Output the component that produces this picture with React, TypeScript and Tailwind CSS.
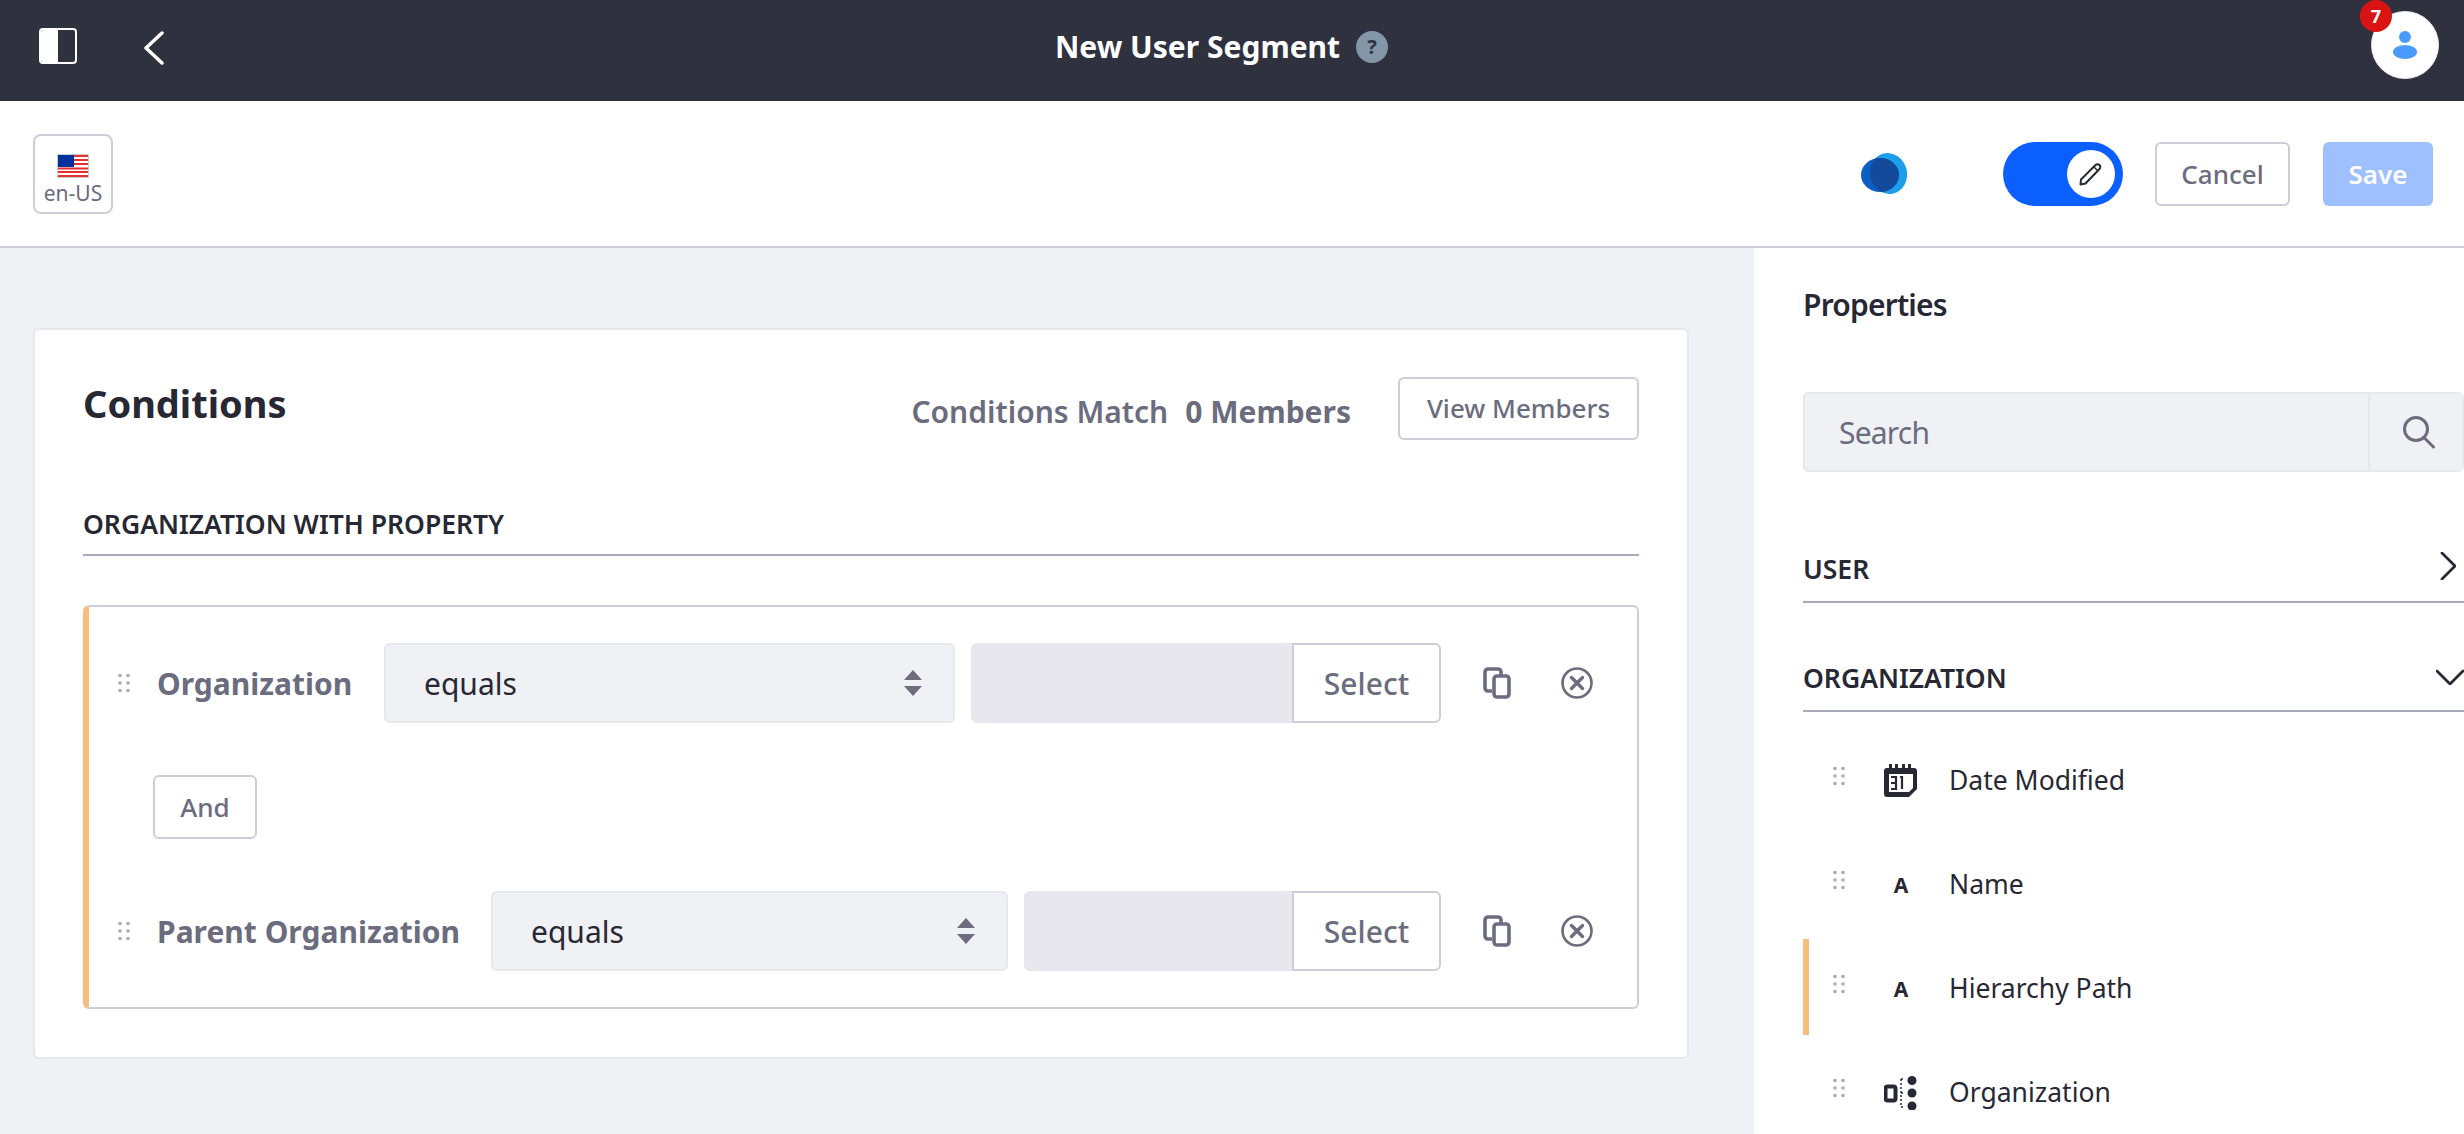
const Grip = () => (
  <svg width="12" height="20" viewBox="0 0 12 20" className="shrink-0 fill-[#a7a9bc]">
    <circle cx="2" cy="2.5" r="1.8" />
    <circle cx="10" cy="2.5" r="1.8" />
    <circle cx="2" cy="10" r="1.8" />
    <circle cx="10" cy="10" r="1.8" />
    <circle cx="2" cy="17.5" r="1.8" />
    <circle cx="10" cy="17.5" r="1.8" />
  </svg>
);

const CopyIcon = () => (
  <svg width="28" height="32" viewBox="0 0 28 32" fill="none" className="stroke-[#6b6c7e] stroke-[3.6]">
    <path d="M9 24H5a3 3 0 0 1-3-3V5a3 3 0 0 1 3-3h10a3 3 0 0 1 3 3v4" />
    <rect x="11" y="9" width="15" height="21" rx="3" />
  </svg>
);

const RemoveIcon = () => (
  <svg width="32" height="32" viewBox="0 0 32 32" fill="none" className="stroke-[#6b6c7e]">
    <circle cx="16" cy="16" r="14.5" strokeWidth="2.6" />
    <path d="M10.5 10.5l11 11M21.5 10.5l-11 11" strokeWidth="3.4" strokeLinecap="round" />
  </svg>
);

const Flag = () => (
  <svg width="32" height="24" viewBox="0 0 32 24" className="block">
    <rect width="32" height="24" fill="#c9cbd6" />
    <rect x="1" y="1" width="30" height="22" fill="#fff" />
    <path d="M1 2h30M1 6h30M1 10h30M1 14.500h30M1 18h30M1 22h30" stroke="#e8312f" strokeWidth="2" />
    <rect x="1" y="1" width="16" height="12" fill="#00309c" />
  </svg>
);

const ConditionRow = ({ label, labelWidth, selectWidth, inputWidth }: { label: string; labelWidth: string; selectWidth: string; inputWidth: string }) => (
  <div className="flex h-[80px] items-center">
    <div className="ml-[29px]">
      <Grip />
    </div>
    <span className={`ml-[27px] whitespace-nowrap text-[30px] font-bold text-[#6b6c7e] ${labelWidth}`}>{label}</span>
    <div className={`flex h-[80px] items-center justify-between rounded-md border-2 border-[#e7e7ed] bg-[#f0f1f5] pl-[38px] pr-[30px] ${selectWidth}`}>
      <span className="text-[30px] text-[#272833]">equals</span>
      <svg width="20" height="26" viewBox="0 0 20 26" className="fill-[#6b6c7e]">
        <path d="M10 0l9 10H1zM10 26L1 16h18z" />
      </svg>
    </div>
    <div className={`ml-[16px] h-[80px] rounded-l-md bg-[#e7e7ed] ${inputWidth}`} />
    <div className="flex h-[80px] w-[149px] items-center justify-center rounded-r-md border-2 border-[#cdced9] bg-white text-[30px] font-medium text-[#6b6c7e]">
      Select
    </div>
    <div className="ml-[42px]">
      <CopyIcon />
    </div>
    <div className="ml-[50px]">
      <RemoveIcon />
    </div>
  </div>
);

const PropertyItem = ({ label, icon, active }: { label: string; icon: React.ReactNode; active?: boolean }) => (
  <div className="relative flex h-[104px] items-center pl-[30px]">
    {active && <div className="absolute left-0 top-[2px] h-[96px] w-[6px] bg-[#f6bd7c]" />}
    <div className="-mt-[10px]">
      <Grip />
    </div>
    <div className="ml-[39px] flex w-[34px] justify-center">{icon}</div>
    <span className="ml-[31px] text-[26.5px] text-[#272833]">{label}</span>
  </div>
);

const LetterIcon = () => <span className="text-[21px] font-bold leading-none text-[#272833]">A</span>;

const CalendarIcon = () => (
  <svg width="34" height="34" viewBox="0 0 34 34">
    <path d="M5 0h3v4h3V0h3v4h4V0h3v4h3V0h3v4h3a3 3 0 0 1 3 3v18l-8 8H3a3 3 0 0 1-3-3V7a3 3 0 0 1 3-3h2z" fill="#272833" />
    <rect x="5" y="10" width="24" height="18" fill="#fff" />
    <path d="M7 13h5v12H7M7 19h5M16 13h2v12" fill="none" stroke="#272833" strokeWidth="2.200" />
    <path d="M25 28h4v-4z" fill="#272833" />
  </svg>
);

const OrgIcon = () => (
  <svg width="34" height="34" viewBox="0 0 34 34">
    <rect x="1.500" y="10.500" width="10" height="14" rx="2" fill="none" stroke="#272833" strokeWidth="4" />
    <path d="M17 3v28M17 3h4M17 17h4M17 31h4" stroke="#272833" strokeWidth="1.500" strokeDasharray="2 2" fill="none" />
    <circle cx="28" cy="4.500" r="4.500" fill="#272833" />
    <circle cx="28" cy="17" r="4.500" fill="#272833" />
    <circle cx="28" cy="30" r="4.500" fill="#272833" />
  </svg>
);

export default function App() {
  return (
    <div className="flex h-[1134px] w-[2464px] flex-col overflow-hidden bg-white font-['Noto_Sans',sans-serif]">
      {/* top bar */}
      <header className="relative flex h-[101px] shrink-0 items-center justify-center bg-[#30313f]">
        <div className="absolute left-[39px] top-[28px] flex h-[36px] w-[38px] overflow-hidden rounded-sm border-2 border-white">
          <div className="w-[17px] bg-white" />
        </div>
        <svg width="22" height="34" viewBox="0 0 22 34" fill="none" className="absolute left-[143px] top-[31px] stroke-white">
          <path d="M19 2L3 17l16 15" strokeWidth="3.500" strokeLinecap="round" strokeLinejoin="round" />
        </svg>
        <div className="-mt-[8px] mr-[21px] flex items-center">
          <span className="text-[30px] font-bold text-white">New User Segment</span>
          <span className="ml-[16px] flex h-[32px] w-[32px] items-center justify-center rounded-full bg-[#8296a7] text-[20px] font-bold text-[#30313f]">?</span>
        </div>
        <div className="absolute left-[2371px] top-[11px] flex h-[68px] w-[68px] items-center justify-center rounded-full border border-[#e7e7ed] bg-white">
          <svg width="24" height="28" viewBox="0 0 24 28" className="fill-[#4b9bff]">
            <circle cx="12" cy="6" r="6" />
            <ellipse cx="12" cy="21" rx="12" ry="7" />
          </svg>
        </div>
        <div className="absolute left-[2360px] top-0 flex h-[32px] w-[32px] items-center justify-center rounded-full bg-[#da1414] text-[18px] font-bold text-white">7</div>
      </header>

      {/* toolbar */}
      <div className="flex h-[147px] shrink-0 items-center border-b-2 border-[#cdced9] pl-[33px] pr-[31px]">
        <div className="flex h-[80px] w-[80px] flex-col items-center rounded-lg border-2 border-[#cdced9] pt-[18px]">
          <Flag />
          <span className="mt-[2px] text-[21px] leading-[26px] text-[#6b6c7e]">en-US</span>
        </div>
        <svg width="46" height="41" viewBox="0 0 46 41" className="ml-auto">
          <defs>
            <clipPath id="logo-overlap">
              <ellipse cx="27.500" cy="20.500" rx="18.500" ry="20.500" transform="rotate(-14 27.500 20.500)" />
            </clipPath>
          </defs>
          <ellipse cx="27.500" cy="20.500" rx="18.500" ry="20.500" fill="#1c9fe8" transform="rotate(-14 27.500 20.500)" />
          <ellipse cx="19" cy="22" rx="19" ry="17" fill="#0b5fc4" />
          <ellipse cx="19" cy="22" rx="19" ry="17" fill="#144a9c" clipPath="url(#logo-overlap)" />
        </svg>
        <div className="ml-[96px] flex h-[64px] w-[120px] items-center justify-end rounded-full bg-[#0b5fff] pr-[8px]">
          <div className="flex h-[48px] w-[48px] items-center justify-center rounded-full bg-white">
            <svg width="24" height="24" viewBox="0 0 24 24" fill="none" className="stroke-[#272833]">
              <path d="M2 17.500L16.500 3a2.500 2.500 0 0 1 4 4L6.500 21.500 1.500 22.500z" strokeWidth="2" strokeLinejoin="round" />
              <path d="M15 5l4 4" strokeWidth="1.500" />
            </svg>
          </div>
        </div>
        <button className="ml-[32px] h-[64px] w-[135px] rounded-md border-2 border-[#cdced9] bg-white pt-[2px] text-[26px] font-medium text-[#6b6c7e]">Cancel</button>
        <button className="ml-[33px] h-[64px] w-[110px] rounded-md bg-[#9fc0ff] pt-[2px] text-[26px] font-semibold text-white">Save</button>
      </div>

      <div className="flex min-h-0 flex-1">
        {/* main */}
        <main className="w-[1754px] shrink-0 bg-[#f0f1f5] pl-[33px] pt-[80px]">
          <section className="h-[731px] w-[1656px] rounded-md border-2 border-[#e7e7ed] bg-white pl-[48px] pt-[47px]">
            <div className="flex h-[65px] w-[1556px] items-start">
              <h2 className="mt-[7px] text-[38px] font-bold leading-[38px] text-[#272833]">Conditions</h2>
              <span className="ml-auto mt-[15px] text-[30px] font-semibold leading-[40px] text-[#6b6c7e]">Conditions Match</span>
              <span className="ml-[17px] mt-[15px] text-[30px] font-bold leading-[40px] text-[#6b6c7e]">0 Members</span>
              <button className="ml-[47px] h-[63px] w-[241px] rounded-md border-2 border-[#cdced9] bg-white text-[26px] font-medium text-[#6b6c7e]">View Members</button>
            </div>
            <div className="mt-[65px] w-[1556px] border-b-2 border-[#a7a9bc] pb-[13px] text-[26.5px] font-semibold leading-[34px] text-[#272833]">
              ORGANIZATION WITH PROPERTY
            </div>
            <div className="mt-[49px] h-[404px] w-[1556px] rounded-md border-2 border-l-[6px] border-[#cdced9] border-l-[#f6bd7c] pt-[36px]">
              <ConditionRow label="Organization" labelWidth="w-[227px]" selectWidth="w-[571px]" inputWidth="w-[321px]" />
              <button className="ml-[64px] mt-[52px] block h-[64px] w-[104px] rounded-md border-2 border-[#cdced9] bg-white text-[26px] font-medium text-[#6b6c7e]">And</button>
              <div className="mt-[52px]">
                <ConditionRow label="Parent Organization" labelWidth="w-[334px]" selectWidth="w-[517px]" inputWidth="w-[268px]" />
              </div>
            </div>
          </section>
        </main>

        {/* properties sidebar */}
        <aside className="flex-1 pl-[49px]">
          <h3 className="mt-[37px] text-[30px] font-semibold leading-[40px] tracking-[-0.8px] text-[#272833]">Properties</h3>
          <div className="mt-[67px] flex h-[80px] items-center rounded-md border-2 border-[#e7e7ed] bg-[#f0f1f5]">
            <span className="flex-1 pl-[34px] text-[30px] tracking-[-0.8px] text-[#6b6c7e]">Search</span>
            <div className="flex h-full w-[94px] items-center justify-center border-l-2 border-[#e7e7ed] pl-[6px]">
              <svg width="34" height="34" viewBox="0 0 34 34" fill="none" className="stroke-[#6b6c7e]">
                <circle cx="14" cy="14" r="11.500" strokeWidth="3" />
                <path d="M22.500 23l9 9" strokeWidth="3" strokeLinecap="round" />
              </svg>
            </div>
          </div>
          <div className="mt-[75px] flex h-[56px] items-start justify-between border-b-2 border-[#a7a9bc] pr-[8px] pt-[5px]">
            <span className="text-[26.5px] font-semibold leading-[34px] text-[#272833]">USER</span>
            <svg width="16" height="28" viewBox="0 0 16 28" fill="none" className="stroke-[#272833]">
              <path d="M2 1l13 13L2 27" strokeWidth="2.800" strokeLinecap="round" strokeLinejoin="round" />
            </svg>
          </div>
          <div className="mt-[53px] flex h-[56px] items-start justify-between border-b-2 border-[#a7a9bc] pt-[5px]">
            <span className="text-[26.5px] font-semibold leading-[34px] text-[#272833]">ORGANIZATION</span>
            <svg width="28" height="16" viewBox="0 0 28 16" fill="none" className="mt-[8px] stroke-[#272833]">
              <path d="M1 2l13 13L27 2" strokeWidth="2.800" strokeLinecap="round" strokeLinejoin="round" />
            </svg>
          </div>
          <div className="mt-[17px]">
            <PropertyItem label="Date Modified" icon={<CalendarIcon />} />
            <PropertyItem label="Name" icon={<LetterIcon />} />
            <PropertyItem label="Hierarchy Path" icon={<LetterIcon />} active />
            <PropertyItem label="Organization" icon={<OrgIcon />} />
          </div>
        </aside>
      </div>
    </div>
  );
}
